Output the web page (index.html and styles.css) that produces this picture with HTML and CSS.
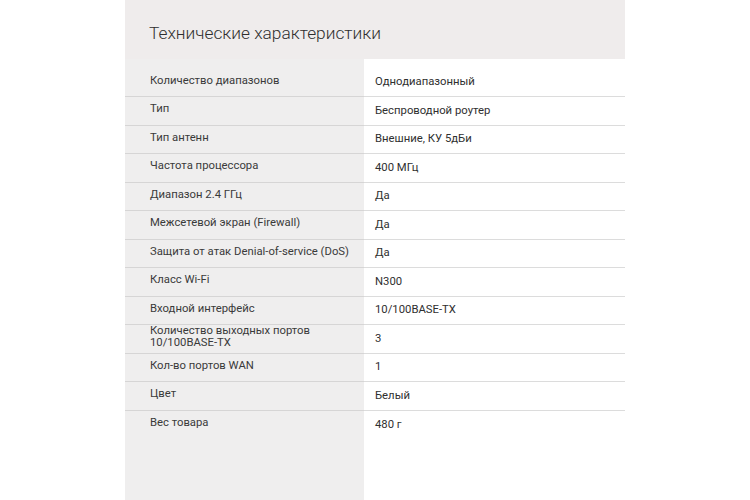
FILE: index.html
```html
<!DOCTYPE html>
<html lang="ru">
<head>
<meta charset="utf-8">
<title>Технические характеристики</title>
<link rel="stylesheet" href="styles.css">
</head>
<body>
<div class="panel">
  <div class="header">Технические характеристики</div>
  <div class="specs">
    <div class="label first">Количество диапазонов</div><div class="value first">Однодиапазонный</div>
    <div class="label">Тип</div><div class="value">Беспроводной роутер</div>
    <div class="label">Тип антенн</div><div class="value">Внешние, КУ 5дБи</div>
    <div class="label">Частота процессора</div><div class="value">400 МГц</div>
    <div class="label">Диапазон 2.4 ГГц</div><div class="value">Да</div>
    <div class="label">Межсетевой экран (Firewall)</div><div class="value">Да</div>
    <div class="label">Защита от атак Denial-of-service (DoS)</div><div class="value">Да</div>
    <div class="label">Класс Wi-Fi</div><div class="value">N300</div>
    <div class="label">Входной интерфейс</div><div class="value">10/100BASE-TX</div>
    <div class="label">Количество выходных портов<br>10/100BASE-TX</div><div class="value">3</div>
    <div class="label">Кол-во портов WAN</div><div class="value">1</div>
    <div class="label">Цвет</div><div class="value">Белый</div>
    <div class="label last">Вес товара</div><div class="value last">480 г</div>
    <div class="fill-left"></div><div class="fill-right"></div>
  </div>
</div>
</body>
</html>
```
FILE: styles.css
```css
html, body {
  margin: 0;
  padding: 0;
  background: #ffffff;
}
body {
  font-family: Roboto, "Liberation Sans", sans-serif;
  height: 500px;
  overflow: hidden;
}
.panel {
  width: 500px;
  margin: 0 auto;
  height: 500px;
  display: flex;
  flex-direction: column;
}
.header {
  box-sizing: border-box;
  height: 59px;
  padding: 23px 24px 0;
  background: #efecec;
  color: #2e2e2e;
  font-size: 17.3px;
  font-weight: 300;
  line-height: 21px;
}
.specs {
  flex: 1;
  display: grid;
  grid-template-columns: 239px 261px;
  grid-template-rows: repeat(13, auto) 1fr;
}
.label, .value {
  box-sizing: border-box;
  min-height: 28.5px;
  display: flex;
  align-items: center;
  font-size: 11.3px;
  line-height: 12px;
}
.label {
  background: #efeeee;
  color: #3a3a3a;
  padding: 0 10px 3px 25px;
  border-bottom: 1px solid #d6d5d5;
}
.value {
  background: #ffffff;
  color: #2f2f2f;
  padding: 0 10px 0 11px;
  border-bottom: 1px solid #dcdcdc;
}
.label.first, .value.first {
  min-height: 38px;
  padding-top: 9.5px;
}
.label.last, .value.last {
  border-bottom: none;
}
.fill-left {
  background: #efeeee;
}
.fill-right {
  background: #ffffff;
}
```
